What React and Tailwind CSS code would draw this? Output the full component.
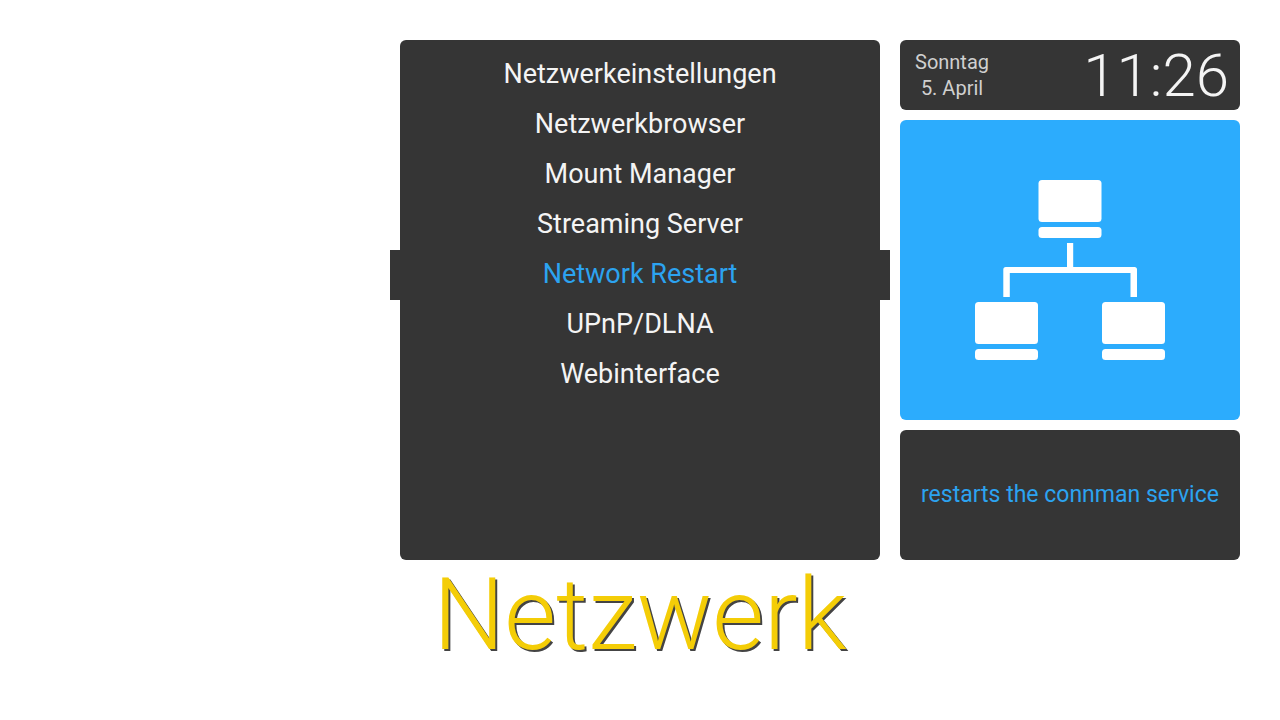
import React, { useState } from "react";

const ITEMS = [
  { id: "settings", label: "Netzwerkeinstellungen" },
  { id: "browser", label: "Netzwerkbrowser" },
  { id: "mounts", label: "Mount Manager" },
  { id: "streaming", label: "Streaming Server" },
  { id: "restart", label: "Network Restart", info: "restarts the connman service" },
  { id: "upnp", label: "UPnP/DLNA" },
  { id: "web", label: "Webinterface" },
];

function Computer({ x, y }) {
  return (
    <g>
      <rect x={x} y={y} width="63" height="42" rx="3.5" />
      <rect x={x} y={y + 47} width="63" height="11" rx="3.5" />
    </g>
  );
}

function NetworkIcon() {
  return (
    <svg viewBox="0 0 190 180" className="w-[190px] h-[180px]" fill="white" aria-hidden="true">
      <Computer x={63.5} y={0} />
      <Computer x={0} y={122} />
      <Computer x={127} y={122} />
      <path d="M92 63h6.2v24H159.500a2.500 2.500 0 0 1 2.500 2.500V117h-6.500V93H34.800v24h-6.500V89.500a2.500 2.500 0 0 1 2.500-2.500H92z" />
    </svg>
  );
}

export default function App() {
  const [selected, setSelected] = useState("restart");
  const current = ITEMS.find((item) => item.id === selected);

  return (
    <div className="min-h-screen bg-white p-10 grid grid-cols-[17fr_24fr_17fr] gap-x-5 content-start font-['Roboto',sans-serif]">
      <nav className="col-start-2 min-h-[520px] bg-[#353535] rounded-md py-2.5">
        <ul>
          {ITEMS.map((item) => (
            <li key={item.id} className="-mx-2.5">
              <button
                onClick={() => setSelected(item.id)}
                className={`w-full h-[50px] pb-0.5 text-center text-[27px] leading-8 ${
                  item.id === selected ? "bg-[#353535] text-[#2ca3f0]" : "text-[#f4f4f4]"
                }`}
              >
                {item.label}
              </button>
            </li>
          ))}
        </ul>
      </nav>

      <aside className="flex flex-col gap-2.5">
        <div className="h-[70px] bg-[#353535] rounded-md pl-[15px] pr-[11px] flex items-center justify-between">
          <p className="text-center text-[20px] leading-[26px] text-[#d0d0d0]">
            Sonntag
            <br />
            5. April
          </p>
          <time className="pt-0.5 font-light text-[60px] leading-[70px] text-[#f4f4f4]">11:26</time>
        </div>
        <div className="h-[300px] bg-[#2cacfd] rounded-md flex items-center justify-center">
          <NetworkIcon />
        </div>
        <div className="flex-1 bg-[#353535] rounded-md px-4 flex items-center justify-center">
          <p className="text-center text-[23px] leading-8 text-[#2ca3f0]">{current.info}</p>
        </div>
      </aside>

      <h1 className="col-start-2 text-center font-light text-[100px] leading-[110px] text-[#f4cd07] [text-shadow:2px_2px_0_#444444]">
        Netzwerk
      </h1>
    </div>
  );
}
